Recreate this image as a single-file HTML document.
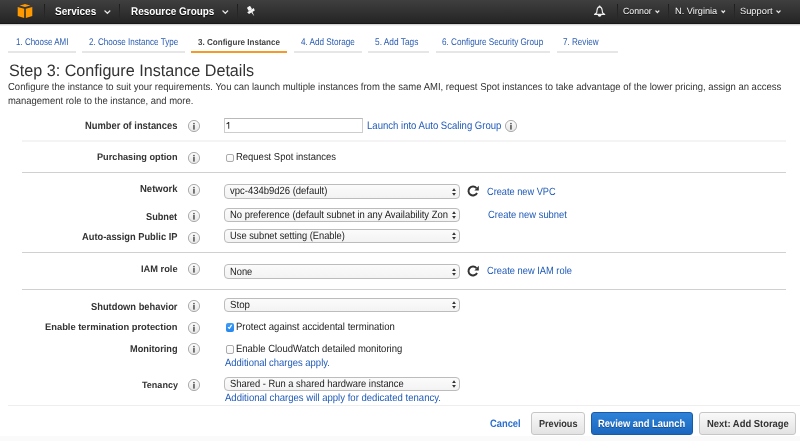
<!DOCTYPE html><html><head><meta charset="utf-8"><style>
html,body{margin:0;padding:0;width:800px;height:441px;overflow:hidden;background:#fff;}
body{position:relative;font-family:"Liberation Sans",sans-serif;text-rendering:geometricPrecision;}
.t{position:absolute;white-space:nowrap;transform-origin:0 0;}
.b{position:absolute;}
.nav{position:absolute;left:0;top:0;width:800px;height:23px;background:linear-gradient(#3f3f3f,#242424);border-bottom:1px solid #171717;}
.navsh{position:absolute;left:0;top:24px;width:800px;height:1.5px;background:linear-gradient(rgba(0,0,0,.22),rgba(0,0,0,0));}
.div{position:absolute;top:4px;width:1px;height:14px;background:linear-gradient(#1c1c1c,rgba(30,30,30,0.2));}
.tabu{position:absolute;top:51px;height:2px;background:#e8e8e8;}
.sep{position:absolute;left:22px;width:764px;height:1px;}
.sep2{height:2px !important;}
.info{position:absolute;width:10px;height:10px;border:1px solid #a9a9a9;border-radius:50%;background:linear-gradient(#fdfdfd,#e9e9e9);}
.sel{position:absolute;left:224px;width:234px;border:1px solid #bcbcbc;border-radius:4px;background:linear-gradient(#fbfbfb,#f3f3f3);}
.cb{position:absolute;left:226px;width:6px;height:6.5px;border:1px solid #ababab;border-radius:2px;background:linear-gradient(#fff,#f6f6f6);}
.btn{position:absolute;top:412px;height:21px;border:1px solid #c6c6c6;border-radius:3px;background:linear-gradient(#f9f9f9,#e3e3e3);}
</style></head><body>
<svg width="0" height="0" style="position:absolute"><defs><linearGradient id="ig" x1="0" y1="0" x2="0" y2="1"><stop offset="0" stop-color="#fdfdfd"/><stop offset="1" stop-color="#e6e6e6"/></linearGradient></defs></svg>
<div class="nav"></div><div class="navsh"></div>
<svg class="b" style="left:12px;top:0px" width="28" height="24" viewBox="12 0 28 24">
<path d="M19.6 5.6 L23.6 4.5 L25 3.9 L26.4 4.5 L30.4 5.6 L25 7.1 Z" fill="#f90"/>
<path d="M17.7 7 L24.2 8.8 L24.2 18 L17.7 16 Z" fill="#f90"/>
<path d="M25.8 8.8 L32.3 7 L32.3 16 L25.8 18 Z" fill="#f90"/>
</svg>
<div class="div" style="left:44px"></div>
<div class="div" style="left:119px"></div>
<div class="div" style="left:237px"></div>
<div class="div" style="left:617px"></div>
<div class="div" style="left:668px"></div>
<div class="div" style="left:734px"></div>
<div class="t" style="left:55.00px;top:6.01px;font-size:11.192px;line-height:12.501px;color:#fff;font-weight:bold;transform:scaleX(0.8957);text-shadow:0 1px 0 rgba(0,0,0,.85);">Services</div>
<div class="t" style="left:130.60px;top:6.01px;font-size:11.192px;line-height:12.501px;color:#fff;font-weight:bold;transform:scaleX(0.8881);text-shadow:0 1px 0 rgba(0,0,0,.85);">Resource Groups</div>
<svg class="b" style="left:102.10px;top:8.00px" width="10.80" height="7.60" viewBox="102.10 8.00 10.80 7.60"><path d="M104.60 10.50 L107.50 13.30 L110.40 10.50" fill="none" stroke="#e8e8e8" stroke-width="1.3" style="filter:drop-shadow(0 0.6px 0.4px #000)"/></svg>
<svg class="b" style="left:220.10px;top:8.00px" width="10.60" height="7.60" viewBox="220.10 8.00 10.60 7.60"><path d="M222.60 10.50 L225.40 13.30 L228.20 10.50" fill="none" stroke="#e8e8e8" stroke-width="1.3" style="filter:drop-shadow(0 0.6px 0.4px #000)"/></svg>
<svg class="b" style="left:240px;top:0px" width="22" height="22" viewBox="240 0 22 22"><g transform="translate(251.4 11.5) rotate(-32)" fill="#f4f4f4">
<rect x="-1.9" y="-5.6" width="3.8" height="4" rx="0.6"/>
<path d="M-3.9 -1.7 L3.9 -1.7 L3.4 0.9 L-3.4 0.9 Z"/>
<path d="M-0.7 0.8 L0.7 0.8 L0 5.6 Z"/>
</g></svg>
<svg class="b" style="left:588px;top:2px" width="22" height="20" viewBox="588 2 22 20">
<path d="M599.6 6.9 C597.8 6.9 597.2 8.6 597.0 10.2 L596.7 12.7 L594.5 14.4 L604.7 14.4 L602.5 12.7 L602.2 10.2 C602.0 8.6 601.4 6.9 599.6 6.9 Z" fill="none" stroke="#eee" stroke-width="1.15" stroke-linejoin="round"/>
<circle cx="599.6" cy="6.4" r="0.9" fill="#eee"/>
<path d="M597.7 14.7 A1.9 2.1 0 0 0 601.5 14.7 Z" fill="#eee"/>
</svg>
<div class="t" style="left:623.20px;top:6.01px;font-size:9.012px;line-height:10.066px;color:#f6f6f6;transform:scaleX(0.9744);text-shadow:0 1px 0 rgba(0,0,0,.6);">Connor</div>
<svg class="b" style="left:653.20px;top:8.00px" width="8.80" height="6.90" viewBox="653.20 8.00 8.80 6.90"><path d="M655.70 10.50 L657.60 12.60 L659.50 10.50" fill="none" stroke="#e8e8e8" stroke-width="1.3" style="filter:drop-shadow(0 0.6px 0.4px #000)"/></svg>
<div class="t" style="left:674.90px;top:6.01px;font-size:9.012px;line-height:10.066px;color:#f6f6f6;transform:scaleX(1.0213);text-shadow:0 1px 0 rgba(0,0,0,.6);">N. Virginia</div>
<svg class="b" style="left:718.80px;top:8.00px" width="8.50" height="6.80" viewBox="718.80 8.00 8.50 6.80"><path d="M721.30 10.50 L723.05 12.50 L724.80 10.50" fill="none" stroke="#e8e8e8" stroke-width="1.3" style="filter:drop-shadow(0 0.6px 0.4px #000)"/></svg>
<div class="t" style="left:740.20px;top:6.01px;font-size:9.012px;line-height:10.066px;color:#f6f6f6;transform:scaleX(1.0330);text-shadow:0 1px 0 rgba(0,0,0,.6);">Support</div>
<svg class="b" style="left:773.90px;top:8.00px" width="9.00" height="6.90" viewBox="773.90 8.00 9.00 6.90"><path d="M776.40 10.50 L778.40 12.60 L780.40 10.50" fill="none" stroke="#e8e8e8" stroke-width="1.3" style="filter:drop-shadow(0 0.6px 0.4px #000)"/></svg>
<div class="tabu" style="left:8px;width:67.5px;background:#e6e6e6"></div>
<div class="t" style="left:15.50px;top:38.00px;font-size:9.738px;line-height:10.878px;color:#2a5cb2;transform:scaleX(0.8219);">1. Choose AMI</div>
<div class="tabu" style="left:82px;width:103px;background:#e6e6e6"></div>
<div class="t" style="left:88.70px;top:38.00px;font-size:9.738px;line-height:10.878px;color:#2a5cb2;transform:scaleX(0.8312);">2. Choose Instance Type</div>
<div class="tabu" style="left:191px;width:96px;background:#f39a2a"></div>
<div class="t" style="left:198.00px;top:38.00px;font-size:8.721px;line-height:9.741px;color:#444;font-weight:bold;transform:scaleX(0.9246);">3. Configure Instance</div>
<div class="tabu" style="left:294px;width:68px;background:#e6e6e6"></div>
<div class="t" style="left:300.50px;top:38.00px;font-size:9.738px;line-height:10.878px;color:#2a5cb2;transform:scaleX(0.8381);">4. Add Storage</div>
<div class="tabu" style="left:368px;width:61px;background:#e6e6e6"></div>
<div class="t" style="left:375.00px;top:38.00px;font-size:9.738px;line-height:10.878px;color:#2a5cb2;transform:scaleX(0.8557);">5. Add Tags</div>
<div class="tabu" style="left:435.5px;width:114.5px;background:#e6e6e6"></div>
<div class="t" style="left:442.00px;top:38.00px;font-size:9.738px;line-height:10.878px;color:#2a5cb2;transform:scaleX(0.8400);">6. Configure Security Group</div>
<div class="tabu" style="left:556.5px;width:61.5px;background:#e6e6e6"></div>
<div class="t" style="left:563.00px;top:38.00px;font-size:9.738px;line-height:10.878px;color:#2a5cb2;transform:scaleX(0.8322);">7. Review</div>
<div class="t" style="left:8.80px;top:62.01px;font-size:16.570px;line-height:18.508px;color:#333;transform:scaleX(0.9752);">Step 3: Configure Instance Details</div>
<div class="t" style="left:8.40px;top:82.01px;font-size:10.174px;line-height:11.365px;color:#333;transform:scaleX(0.9355);">Configure the instance to suit your requirements. You can launch multiple instances from the same AMI, request Spot instances to take advantage of the lower pricing, assign an access</div>
<div class="t" style="left:8.40px;top:96.01px;font-size:10.174px;line-height:11.365px;color:#333;transform:scaleX(0.9296);">management role to the instance, and more.</div>
<div class="sep sep2" style="top:140px;background:#f4f4f4"></div>
<div class="sep" style="top:172px;background:#d0d0d0"></div>
<div class="sep" style="top:252px;background:#d0d0d0"></div>
<div class="sep" style="top:289px;background:#d0d0d0"></div>
<div class="sep" style="left:8px;width:792px;top:405px;background:#eeeeee"></div>
<div class="t" style="left:85.00px;top:121.01px;font-size:10.538px;line-height:11.771px;color:#333;font-weight:bold;transform:scaleX(0.8884);">Number of instances</div>
<svg class="b" style="left:187px;top:119px" width="14" height="14" viewBox="0 0 14 14"><circle cx="7" cy="7" r="5.6" fill="url(#ig)" stroke="#a4a4a4" stroke-width="0.9"/><rect x="6.15" y="3.9" width="1.6" height="1.1" fill="#5a5a5a"/><rect x="6.15" y="5.7" width="1.6" height="4.9" fill="#5a5a5a"/></svg>
<div class="b" style="left:224px;top:118px;width:137px;height:13px;border:1px solid #cdcdcd;border-top-color:#b9b9b9;background:#fff"></div>
<svg class="b" style="left:224px;top:119px" width="8" height="12" viewBox="224 119 8 12"><path d="M228.4 121.9 L229.2 121.9 L229.2 128.7 L228.3 128.7 L228.3 123.5 L226.4 124.3 L226.4 123.5 Z" fill="#222"/></svg>
<div class="t" style="left:366.50px;top:120.00px;font-size:10.756px;line-height:12.014px;color:#1f5ab8;transform:scaleX(0.8890);">Launch into Auto Scaling Group</div>
<svg class="b" style="left:504px;top:119px" width="14" height="14" viewBox="0 0 14 14"><circle cx="7" cy="7" r="5.6" fill="url(#ig)" stroke="#a4a4a4" stroke-width="0.9"/><rect x="6.15" y="3.9" width="1.6" height="1.1" fill="#5a5a5a"/><rect x="6.15" y="5.7" width="1.6" height="4.9" fill="#5a5a5a"/></svg>
<div class="t" style="left:97.00px;top:153.01px;font-size:9.448px;line-height:10.553px;color:#333;font-weight:bold;transform:scaleX(0.9719);">Purchasing option</div>
<svg class="b" style="left:187px;top:150.5px" width="14" height="14" viewBox="0 0 14 14"><circle cx="7" cy="7" r="5.6" fill="url(#ig)" stroke="#a4a4a4" stroke-width="0.9"/><rect x="6.15" y="3.9" width="1.6" height="1.1" fill="#5a5a5a"/><rect x="6.15" y="5.7" width="1.6" height="4.9" fill="#5a5a5a"/></svg>
<div class="cb" style="top:153.5px"></div>
<div class="t" style="left:236.25px;top:152.00px;font-size:10.102px;line-height:11.284px;color:#222;transform:scaleX(0.9373);">Request Spot instances</div>
<div class="t" style="left:140.00px;top:184.00px;font-size:10.029px;line-height:11.202px;color:#333;font-weight:bold;transform:scaleX(0.9499);">Network</div>
<svg class="b" style="left:187px;top:182.5px" width="14" height="14" viewBox="0 0 14 14"><circle cx="7" cy="7" r="5.6" fill="url(#ig)" stroke="#a4a4a4" stroke-width="0.9"/><rect x="6.15" y="3.9" width="1.6" height="1.1" fill="#5a5a5a"/><rect x="6.15" y="5.7" width="1.6" height="4.9" fill="#5a5a5a"/></svg>
<div class="sel" style="top:184px;height:13px"></div>
<div class="t" style="left:230.00px;top:186.01px;font-size:10.465px;line-height:11.690px;color:#222;transform:scaleX(0.9058);">vpc-434b9d26 (default)</div>
<svg class="b" style="left:450px;top:186.5px" width="8" height="10" viewBox="0 0 8 10"><path d="M2.1 3.9 L4 1.2 L5.9 3.9 Z M2.1 6.0 L4 8.7 L5.9 6.0 Z" fill="#333"/></svg>
<svg class="b" style="left:464.8px;top:182.8px" width="16" height="16" viewBox="-8 -8 16 16"><path d="M4.02 2.0 A4.5 4.5 0 1 1 3.45 -2.9" fill="none" stroke="#333" stroke-width="2"/><path d="M1.4 -0.5 L5.8 -0.5 L5.8 -5.2 Z" fill="#333"/></svg>
<div class="t" style="left:487.30px;top:187.00px;font-size:10.465px;line-height:11.690px;color:#1f5ab8;transform:scaleX(0.8814);">Create new VPC</div>
<div class="t" style="left:146.40px;top:212.00px;font-size:10.029px;line-height:11.202px;color:#333;font-weight:bold;transform:scaleX(0.9180);">Subnet</div>
<svg class="b" style="left:187px;top:208.75px" width="14" height="14" viewBox="0 0 14 14"><circle cx="7" cy="7" r="5.6" fill="url(#ig)" stroke="#a4a4a4" stroke-width="0.9"/><rect x="6.15" y="3.9" width="1.6" height="1.1" fill="#5a5a5a"/><rect x="6.15" y="5.7" width="1.6" height="4.9" fill="#5a5a5a"/></svg>
<div class="sel" style="top:208px;height:12px"></div>
<div class="t" style="left:230.00px;top:210.01px;font-size:10.465px;line-height:11.690px;color:#222;transform:scaleX(0.9023);">No preference (default subnet in any Availability Zon</div>
<svg class="b" style="left:450px;top:210.0px" width="8" height="10" viewBox="0 0 8 10"><path d="M2.1 3.9 L4 1.2 L5.9 3.9 Z M2.1 6.0 L4 8.7 L5.9 6.0 Z" fill="#333"/></svg>
<div class="t" style="left:488.00px;top:210.01px;font-size:10.465px;line-height:11.690px;color:#1f5ab8;transform:scaleX(0.8993);">Create new subnet</div>
<div class="t" style="left:82.00px;top:232.00px;font-size:10.029px;line-height:11.202px;color:#333;font-weight:bold;transform:scaleX(0.9274);">Auto-assign Public IP</div>
<svg class="b" style="left:187px;top:230.5px" width="14" height="14" viewBox="0 0 14 14"><circle cx="7" cy="7" r="5.6" fill="url(#ig)" stroke="#a4a4a4" stroke-width="0.9"/><rect x="6.15" y="3.9" width="1.6" height="1.1" fill="#5a5a5a"/><rect x="6.15" y="5.7" width="1.6" height="4.9" fill="#5a5a5a"/></svg>
<div class="sel" style="top:229px;height:12px"></div>
<div class="t" style="left:230.00px;top:231.01px;font-size:10.465px;line-height:11.690px;color:#222;transform:scaleX(0.8905);">Use subnet setting (Enable)</div>
<svg class="b" style="left:450px;top:231.0px" width="8" height="10" viewBox="0 0 8 10"><path d="M2.1 3.9 L4 1.2 L5.9 3.9 Z M2.1 6.0 L4 8.7 L5.9 6.0 Z" fill="#333"/></svg>
<div class="t" style="left:141.00px;top:265.01px;font-size:9.448px;line-height:10.553px;color:#333;font-weight:bold;transform:scaleX(0.9820);">IAM role</div>
<svg class="b" style="left:187px;top:262.25px" width="14" height="14" viewBox="0 0 14 14"><circle cx="7" cy="7" r="5.6" fill="url(#ig)" stroke="#a4a4a4" stroke-width="0.9"/><rect x="6.15" y="3.9" width="1.6" height="1.1" fill="#5a5a5a"/><rect x="6.15" y="5.7" width="1.6" height="4.9" fill="#5a5a5a"/></svg>
<div class="sel" style="top:264px;height:13px"></div>
<div class="t" style="left:230.00px;top:267.01px;font-size:10.465px;line-height:11.690px;color:#222;transform:scaleX(0.8892);">None</div>
<svg class="b" style="left:450px;top:266.5px" width="8" height="10" viewBox="0 0 8 10"><path d="M2.1 3.9 L4 1.2 L5.9 3.9 Z M2.1 6.0 L4 8.7 L5.9 6.0 Z" fill="#333"/></svg>
<svg class="b" style="left:464.5px;top:263.0px" width="16" height="16" viewBox="-8 -8 16 16"><path d="M4.02 2.0 A4.5 4.5 0 1 1 3.45 -2.9" fill="none" stroke="#333" stroke-width="2"/><path d="M1.4 -0.5 L5.8 -0.5 L5.8 -5.2 Z" fill="#333"/></svg>
<div class="t" style="left:486.50px;top:266.01px;font-size:10.465px;line-height:11.690px;color:#1f5ab8;transform:scaleX(0.8911);">Create new IAM role</div>
<div class="t" style="left:91.00px;top:302.00px;font-size:10.029px;line-height:11.202px;color:#333;font-weight:bold;transform:scaleX(0.9307);">Shutdown behavior</div>
<svg class="b" style="left:187px;top:298.75px" width="14" height="14" viewBox="0 0 14 14"><circle cx="7" cy="7" r="5.6" fill="url(#ig)" stroke="#a4a4a4" stroke-width="0.9"/><rect x="6.15" y="3.9" width="1.6" height="1.1" fill="#5a5a5a"/><rect x="6.15" y="5.7" width="1.6" height="4.9" fill="#5a5a5a"/></svg>
<div class="sel" style="top:298px;height:12px"></div>
<div class="t" style="left:230.00px;top:300.00px;font-size:10.247px;line-height:11.446px;color:#222;transform:scaleX(0.9488);">Stop</div>
<svg class="b" style="left:450px;top:300.0px" width="8" height="10" viewBox="0 0 8 10"><path d="M2.1 3.9 L4 1.2 L5.9 3.9 Z M2.1 6.0 L4 8.7 L5.9 6.0 Z" fill="#333"/></svg>
<div class="t" style="left:45.00px;top:323.01px;font-size:9.448px;line-height:10.553px;color:#333;font-weight:bold;transform:scaleX(0.9906);">Enable termination protection</div>
<svg class="b" style="left:187px;top:320.5px" width="14" height="14" viewBox="0 0 14 14"><circle cx="7" cy="7" r="5.6" fill="url(#ig)" stroke="#a4a4a4" stroke-width="0.9"/><rect x="6.15" y="3.9" width="1.6" height="1.1" fill="#5a5a5a"/><rect x="6.15" y="5.7" width="1.6" height="4.9" fill="#5a5a5a"/></svg>
<div class="b" style="left:226px;top:323.4px;width:8px;height:8.2px;border-radius:2px;background:linear-gradient(#3d9df9,#2586ee)"></div>
<svg class="b" style="left:226px;top:323.4px" width="8" height="8" viewBox="0 0 8 8"><path d="M2.0 4.3 L3.4 5.3 L5.6 1.9" fill="none" stroke="#fff" stroke-width="1.2"/></svg>
<div class="t" style="left:236.00px;top:322.01px;font-size:10.465px;line-height:11.690px;color:#222;transform:scaleX(0.9105);">Protect against accidental termination</div>
<div class="t" style="left:129.70px;top:345.00px;font-size:9.738px;line-height:10.878px;color:#333;font-weight:bold;transform:scaleX(0.9463);">Monitoring</div>
<svg class="b" style="left:187px;top:342.25px" width="14" height="14" viewBox="0 0 14 14"><circle cx="7" cy="7" r="5.6" fill="url(#ig)" stroke="#a4a4a4" stroke-width="0.9"/><rect x="6.15" y="3.9" width="1.6" height="1.1" fill="#5a5a5a"/><rect x="6.15" y="5.7" width="1.6" height="4.9" fill="#5a5a5a"/></svg>
<div class="cb" style="top:345.2px"></div>
<div class="t" style="left:236.00px;top:344.01px;font-size:10.465px;line-height:11.690px;color:#222;transform:scaleX(0.9071);">Enable CloudWatch detailed monitoring</div>
<div class="t" style="left:225.00px;top:358.01px;font-size:10.465px;line-height:11.690px;color:#1f5ab8;transform:scaleX(0.9039);">Additional charges apply.</div>
<div class="t" style="left:141.60px;top:380.00px;font-size:9.157px;line-height:10.228px;color:#333;font-weight:bold;transform:scaleX(0.9871);">Tenancy</div>
<svg class="b" style="left:187px;top:377.5px" width="14" height="14" viewBox="0 0 14 14"><circle cx="7" cy="7" r="5.6" fill="url(#ig)" stroke="#a4a4a4" stroke-width="0.9"/><rect x="6.15" y="3.9" width="1.6" height="1.1" fill="#5a5a5a"/><rect x="6.15" y="5.7" width="1.6" height="4.9" fill="#5a5a5a"/></svg>
<div class="sel" style="top:377px;height:12px"></div>
<div class="t" style="left:230.00px;top:379.01px;font-size:10.465px;line-height:11.690px;color:#222;transform:scaleX(0.8950);">Shared - Run a shared hardware instance</div>
<svg class="b" style="left:450px;top:379.0px" width="8" height="10" viewBox="0 0 8 10"><path d="M2.1 3.9 L4 1.2 L5.9 3.9 Z M2.1 6.0 L4 8.7 L5.9 6.0 Z" fill="#333"/></svg>
<div class="t" style="left:225.00px;top:393.01px;font-size:10.465px;line-height:11.690px;color:#1f5ab8;transform:scaleX(0.9139);">Additional charges will apply for dedicated tenancy.</div>
<div class="b" style="left:0;top:436px;width:800px;height:5px;background:#fafafa"></div>
<div class="t" style="left:490.40px;top:419.01px;font-size:10.610px;line-height:11.852px;color:#2a6fd0;font-weight:bold;transform:scaleX(0.8795);">Cancel</div>
<div class="btn" style="left:531px;width:52px"></div>
<div class="t" style="left:538.70px;top:419.01px;font-size:10.029px;line-height:11.202px;color:#333;font-weight:bold;transform:scaleX(0.9088);">Previous</div>
<div class="btn" style="left:591px;width:100px;border-color:#1859a8;background:linear-gradient(#2d83d8,#1b66bf)"></div>
<div class="t" style="left:598.40px;top:419.01px;font-size:10.610px;line-height:11.852px;color:#fff;font-weight:bold;transform:scaleX(0.8804);text-shadow:0 1px 0 rgba(0,0,0,.3);">Review and Launch</div>
<div class="btn" style="left:699px;width:95px"></div>
<div class="t" style="left:706.80px;top:419.01px;font-size:10.174px;line-height:11.365px;color:#333;font-weight:bold;transform:scaleX(0.9279);">Next: Add Storage</div>
</body></html>
